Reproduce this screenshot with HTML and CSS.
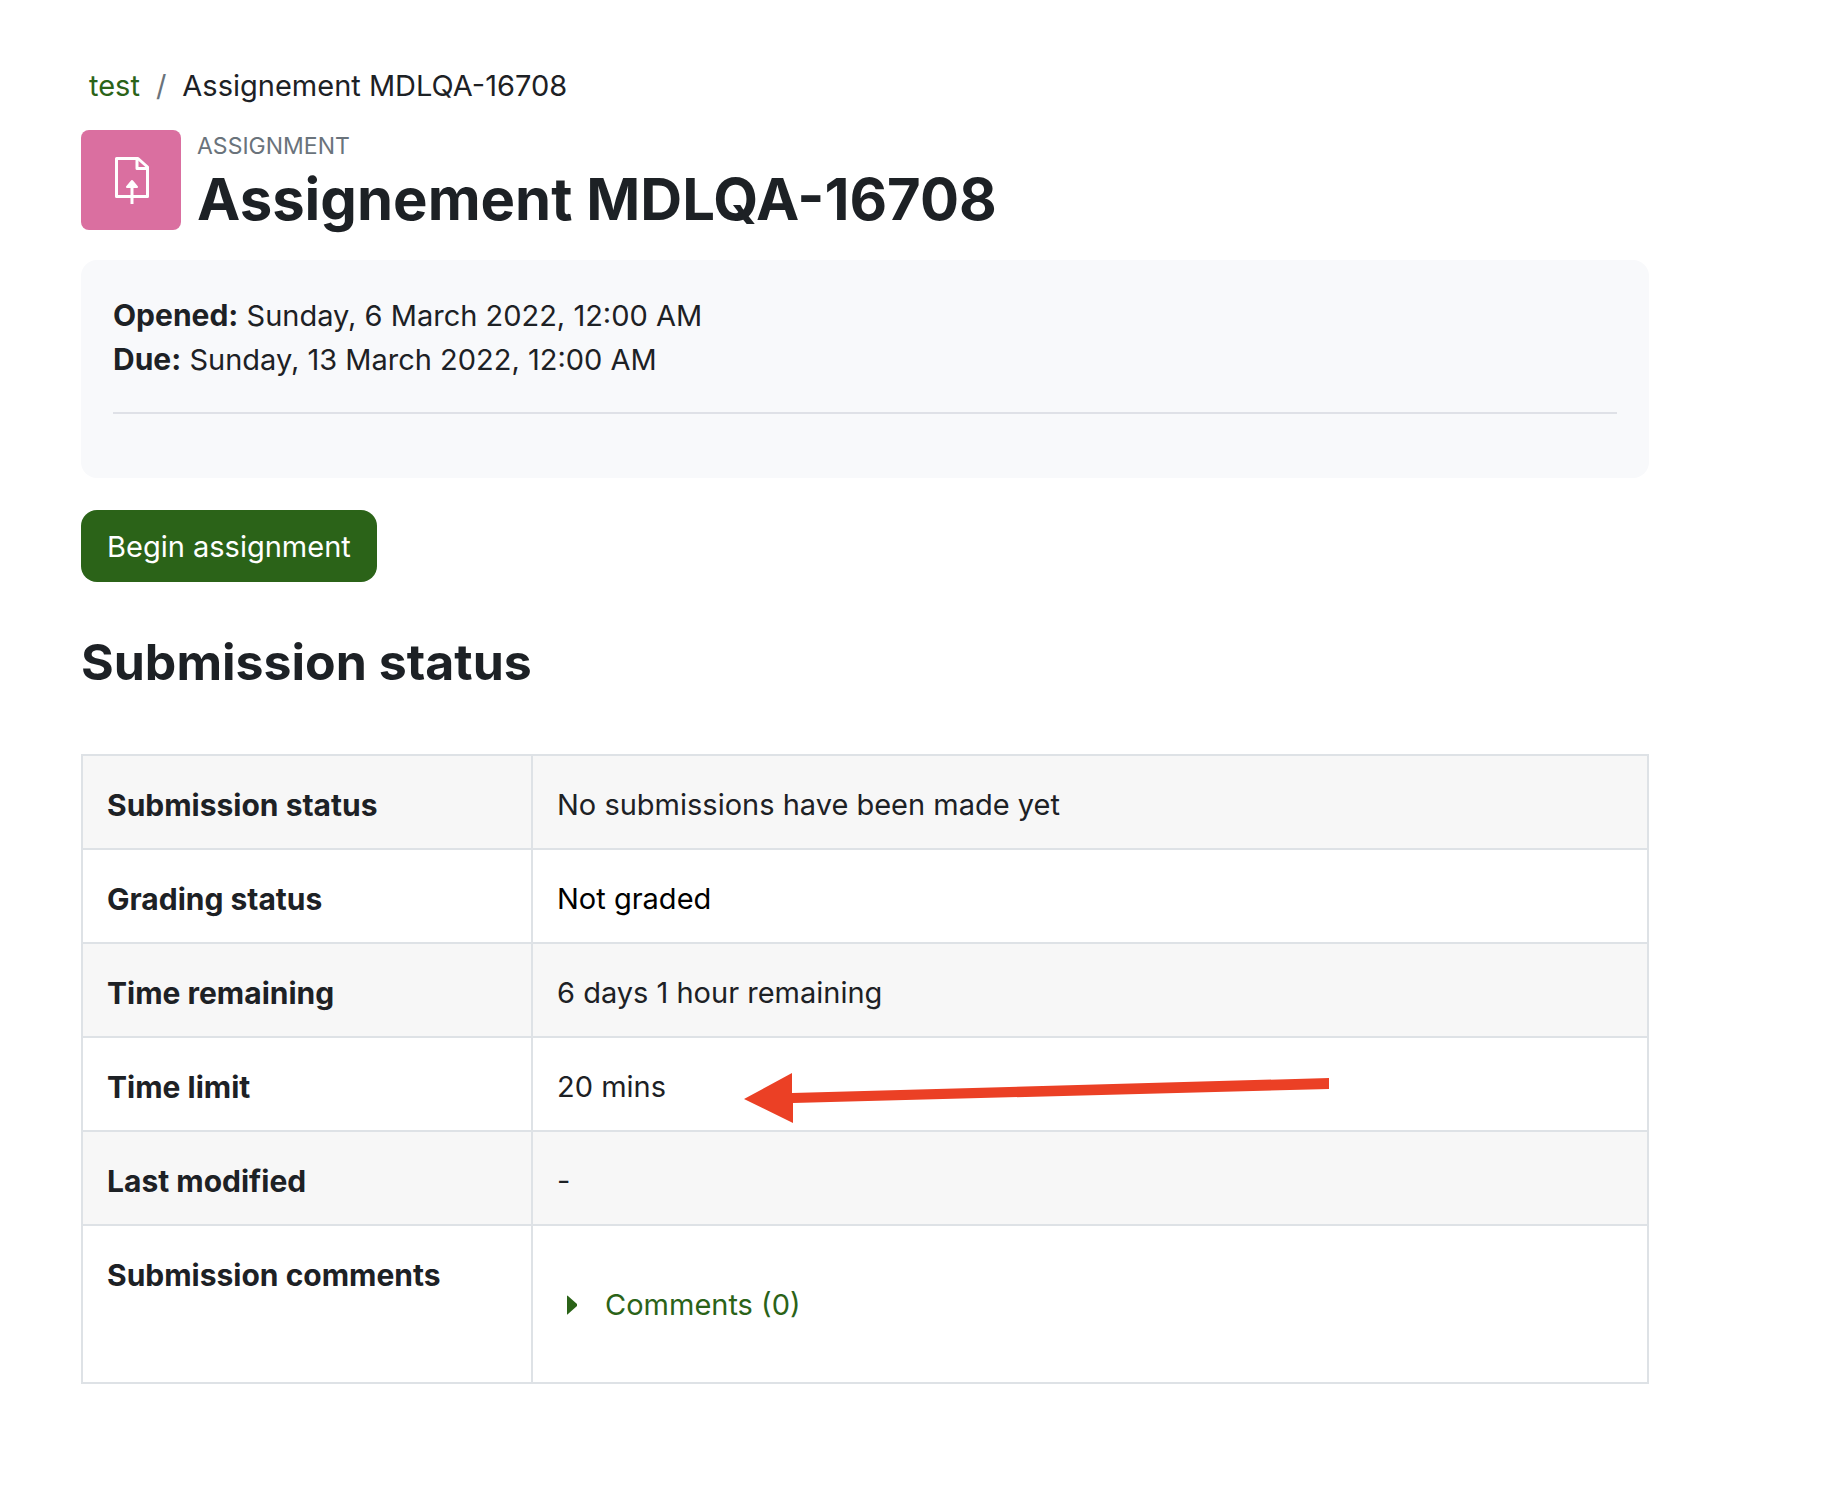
FILE: index.html
```html
<!DOCTYPE html>
<html lang="en">
<head>
    <meta charset="UTF-8">
    <meta name="viewport" content="width=device-width, initial-scale=1.0">
    <title>Assignement MDLQA-16708</title>
    <link rel="stylesheet" href="styles.css">
</head>
<body>
    <main class="page">
        <nav aria-label="Breadcrumb">
            <ol class="breadcrumb">
                <li><a href="#">test</a></li>
                <li>Assignement MDLQA-16708</li>
            </ol>
        </nav>

        <header class="page-header">
            <div class="activity-icon">
                <svg width="36" height="50" viewBox="0 0 36 50" fill="none" stroke="#fff" stroke-width="3" stroke-linejoin="round" aria-hidden="true">
                    <path d="M3.500 3.500H25L34.500 12V41.500H3.500Z"/>
                    <path d="M24 3.500V13.500H34.500"/>
                    <path d="M19 30V49"/>
                    <path d="M19 26L24 32H14Z" fill="#fff" stroke-width="2"/>
                </svg>
            </div>
            <div>
                <div class="activity-type">Assignment</div>
                <h1>Assignement MDLQA-16708</h1>
            </div>
        </header>

        <section class="activity-info">
            <div><strong>Opened:</strong> Sunday, 6 March 2022, 12:00 AM</div>
            <div><strong>Due:</strong> Sunday, 13 March 2022, 12:00 AM</div>
            <hr>
        </section>

        <button type="button" class="btn">Begin assignment</button>

        <h2>Submission status</h2>

        <table class="status-table">
            <tbody>
                <tr>
                    <th scope="row">Submission status</th>
                    <td>No submissions have been made yet</td>
                </tr>
                <tr>
                    <th scope="row">Grading status</th>
                    <td class="not-graded">Not graded</td>
                </tr>
                <tr>
                    <th scope="row">Time remaining</th>
                    <td>6 days 1 hour remaining</td>
                </tr>
                <tr>
                    <th scope="row">Time limit</th>
                    <td class="time-limit">
                        20 mins
                        <svg class="arrow" width="586" height="52" viewBox="0 0 586 52" fill="#eb4025" aria-hidden="true">
                            <path d="M0 27L48 1V21L585 6V17L49 31V51Z"/>
                        </svg>
                    </td>
                </tr>
                <tr>
                    <th scope="row">Last modified</th>
                    <td>-</td>
                </tr>
                <tr>
                    <th scope="row">Submission comments</th>
                    <td class="comments">
                        <a href="#" class="comment-link">
                            <svg width="10" height="20" viewBox="0 0 10 20" fill="currentColor" aria-hidden="true">
                                <path d="M0 1Q0 0 1 1L10 9Q10 10 10 11L1 19Q0 20 0 19Z"/>
                            </svg>
                            Comments (0)
                        </a>
                    </td>
                </tr>
            </tbody>
        </table>
    </main>
</body>
</html>
```

FILE: styles.css
```css
body {
    margin: 0;
    background: #fff;
    color: #1d2125;
    font-family: Inter, "Liberation Sans", sans-serif;
    font-size: 29px;
    line-height: 44px;
}

a {
    color: #2b6318;
    text-decoration: none;
}

.page {
    padding: 64px 191px 64px 81px;
}

.breadcrumb {
    display: flex;
    margin: 0;
    padding: 0 8px;
    list-style: none;
}

.breadcrumb li + li::before {
    content: "/";
    padding: 0 16px;
    color: #6a737b;
}

.page-header {
    display: flex;
    gap: 16px;
    margin-top: 22px;
}

.activity-icon {
    display: flex;
    align-items: center;
    justify-content: center;
    width: 100px;
    height: 100px;
    border-radius: 8px;
    background: #da6fa0;
}

.activity-type {
    color: #6a737b;
    font-size: 23px;
    line-height: 32px;
    text-transform: uppercase;
}

h1 {
    margin: 0;
    font-size: 58px;
    font-weight: 700;
    line-height: 74px;
}

.activity-info {
    margin-top: 24px;
    padding: 34px 32px 32px;
    border-radius: 16px;
    background: #f8f9fb;
}

.activity-info strong {
    font-size: 30px;
    line-height: 1;
}

.activity-info hr {
    height: 2px;
    margin: 30px 0 32px;
    border: 0;
    background: #dfe1e7;
}

.btn {
    display: block;
    margin-top: 32px;
    padding: 15px 26px 13px;
    border: 0;
    border-radius: 16px;
    background: #2b6318;
    color: #fff;
    font: inherit;
    cursor: pointer;
}

h2 {
    margin: 48px 0 60px;
    font-size: 50px;
    font-weight: 700;
    line-height: 64px;
}

.status-table {
    width: 100%;
    border-collapse: collapse;
}

.status-table th,
.status-table td {
    padding: 27px 24px 21px;
    border: 2px solid #dee2e6;
    text-align: left;
    vertical-align: top;
}

.status-table th {
    width: 400px;
    font-size: 30px;
    font-weight: 700;
}

.status-table tr:nth-child(odd) {
    background: #f7f7f7;
}

.status-table .not-graded {
    color: #000;
}

.time-limit {
    position: relative;
}

/* hand drawn arrow pointing at the time limit */
.arrow {
    position: absolute;
    top: 34px;
    left: 211px;
}

.status-table .comments {
    padding: 57px 24px 55px;
}

.comment-link {
    display: flex;
    align-items: center;
    gap: 28px;
    padding-left: 10px;
}
```
